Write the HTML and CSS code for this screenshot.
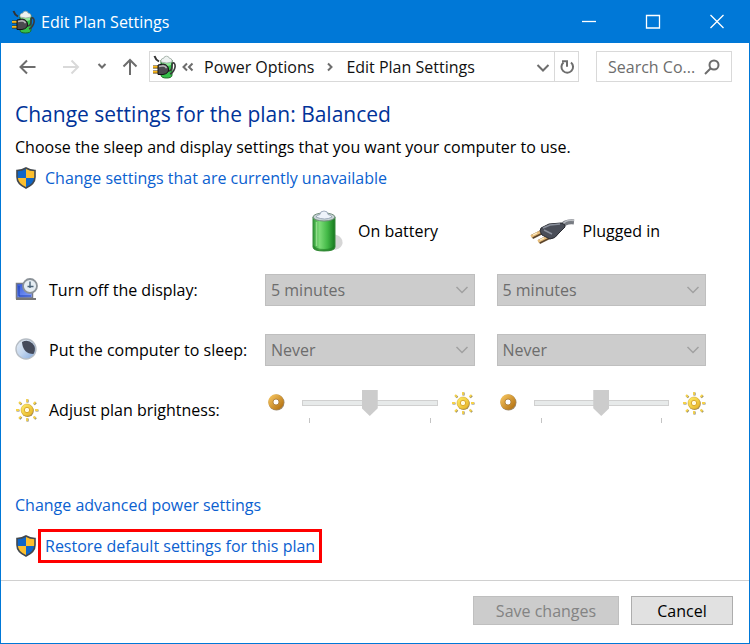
FILE: index.html
```html
<!DOCTYPE html>
<html lang="en">
<head>
    <meta charset="UTF-8">
    <meta name="viewport" content="width=device-width, initial-scale=1.0">
    <title>Edit Plan Settings</title>
    <link rel="stylesheet" href="styles.css">
</head>
<body>
    <!-- Shared icons -->
    <svg class="sprite" aria-hidden="true">
        <defs>
            <linearGradient id="green" x1="0" x2="1" y1="0" y2="0">
                <stop offset="0" stop-color="#2f9a36"/>
                <stop offset="0.3" stop-color="#7ddc78"/>
                <stop offset="0.65" stop-color="#43b947"/>
                <stop offset="1" stop-color="#16781e"/>
            </linearGradient>
            <linearGradient id="gold" x1="0" x2="1" y1="0" y2="1">
                <stop offset="0" stop-color="#f0bd58"/>
                <stop offset="1" stop-color="#b87716"/>
            </linearGradient>
            <linearGradient id="yellow" x1="0" x2="1" y1="0" y2="1">
                <stop offset="0" stop-color="#fff06a"/>
                <stop offset="1" stop-color="#e6b022"/>
            </linearGradient>
            <linearGradient id="screen" x1="0" x2="1" y1="0" y2="1">
                <stop offset="0" stop-color="#2f55d8"/>
                <stop offset="1" stop-color="#8fa9ff"/>
            </linearGradient>
            <linearGradient id="moon" x1="0" x2="1" y1="0" y2="1">
                <stop offset="0" stop-color="#e9eff5"/>
                <stop offset="0.5" stop-color="#c3d6ee"/>
                <stop offset="1" stop-color="#7fa6dc"/>
            </linearGradient>
        </defs>
        <symbol id="icon-power" viewBox="0 0 24 24">
            <path d="M9 5v15q0 3 5.500 3t5.500-3V5z" fill="#35c04a" stroke="#1b6a22"/>
            <path d="M10 6h9v4q-4 2-9 0z" fill="#8fe89a"/>
            <path d="M9 5.500q0-2 3-2.500 0-1.800 2.500-1.800T17 3q3 .5 3 2.500v1.500q-5 2-11 0z" fill="#eef2f0" stroke="#9aa8a0" stroke-width=".8"/>
            <path d="M2.500 1q1 3.500 4.500 5.500" fill="none" stroke="#333" stroke-width="2"/>
            <path d="M16 16q4 0 4-4.500T22 8q2 2 .5 6T18 19" fill="none" stroke="#3a3a3c" stroke-width="1.600"/>
            <path d="M1 12h5M1 17h5" stroke="#4b3300" stroke-width="3"/>
            <path d="M1 11.800h5M1 16.800h5" stroke="#fbb91f" stroke-width="1.800"/>
            <path d="M6 10l5-1q5 .5 5.500 5T11 19.500H6z" fill="#4a4a4e" stroke="#151515"/>
            <path d="M7 11.500l4-.8q3 .5 3.500 2.500" fill="none" stroke="#b5b5b8" stroke-width="1.500"/>
        </symbol>
        <symbol id="icon-shield" viewBox="0 0 20 22">
            <path d="M10 1Q6 3.500 1 3.500V10q0 7 9 11z" fill="#0f66c8"/>
            <path d="M10 1q4 2.500 9 2.500V10q0 7-9 11z" fill="#fcbf2e"/>
            <path d="M1 11h9v10Q2 17.500 1 11z" fill="#fcbf2e"/>
            <path d="M10 11h9q-1 6.500-9 10z" fill="#0f66c8"/>
            <path d="M10 1Q6 3.500 1 3.500V10q0 7 9 11 9-4 9-11V3.500Q14 3.500 10 1z" fill="none" stroke="#42484e" stroke-width="1.600"/>
        </symbol>
        <symbol id="icon-sun" viewBox="0 0 24 24">
            <g stroke="#85806a" stroke-width="2.200">
                <path d="M12.500 1.500v3M12.500 20.500v3M1.500 12.500h3M20.500 12.500h3M4.500 4.500l2 2M19 19l2 2M4.500 21l2-2M19 6.500l2-2"/>
            </g>
            <g stroke="#f6d24a" stroke-width="1.800">
                <path d="M12 1v3M12 20v3M1 12h3M20 12h3M4 4l2 2M18.500 18.500l2 2M4 20.500l2-2M18.500 6l2-2"/>
            </g>
            <circle cx="12.600" cy="12.800" r="6.200" fill="#a38b55"/>
            <circle cx="12" cy="12" r="6" fill="url(#yellow)" stroke="#dcae30" stroke-width=".6"/>
            <circle cx="12" cy="12" r="2.700" fill="#fffbe0" stroke="#dba92c"/>
        </symbol>
        <symbol id="icon-dim" viewBox="0 0 24 24">
            <circle cx="11.500" cy="11.600" r="8" fill="#9b8a70"/>
            <circle cx="11" cy="11" r="5.400" fill="none" stroke="url(#gold)" stroke-width="4.800"/>
            <circle cx="11" cy="11" r="3" fill="#fff" stroke="#a8752a" stroke-width=".8"/>
        </symbol>
    </svg>

    <div class="window">
        <!-- Title bar -->
        <header class="titlebar">
            <svg class="icon"><use href="#icon-power"/></svg>
            <span class="titlebar-text">Edit Plan Settings</span>
            <button class="window-button" aria-label="Minimize">
                <svg width="16" height="16" viewBox="0 0 16 16"><path d="M1 7.500h14"/></svg>
            </button>
            <button class="window-button" aria-label="Maximize">
                <svg width="16" height="16" viewBox="0 0 16 16"><path d="M1.500 1.500h13v12.500h-13z"/></svg>
            </button>
            <button class="window-button" aria-label="Close">
                <svg width="16" height="16" viewBox="0 0 16 16"><path d="M1.500 1l13 13M14.500 1l-13 13"/></svg>
            </button>
        </header>

        <!-- Navigation -->
        <nav class="toolbar">
            <div class="nav-buttons">
                <button aria-label="Back">
                    <svg width="18" height="18" viewBox="0 0 18 18"><path d="M17.500 9H2.500M9 2.500L2.500 9 9 15.500"/></svg>
                </button>
                <button class="faded" aria-label="Forward" disabled>
                    <svg width="18" height="18" viewBox="0 0 18 18"><path d="M1 9h15M9.500 2.500L16 9l-6.500 6.500"/></svg>
                </button>
                <button aria-label="Recent locations">
                    <svg width="10" height="18" viewBox="0 0 10 18"><path d="M1.500 6L5 9.500 8.500 6"/></svg>
                </button>
                <button aria-label="Up">
                    <svg width="18" height="18" viewBox="0 0 18 18"><path d="M9 17V2M2.500 8.500L9 2l6.500 6.500"/></svg>
                </button>
            </div>
            <div class="address">
                <svg class="icon"><use href="#icon-power"/></svg>
                <svg class="crumb-more" width="12" height="10" viewBox="0 0 12 10"><path d="M5 1.500L1.500 5 5 8.500M10.500 1.500L7 5l3.500 3.500"/></svg>
                <a class="crumb" href="#">Power Options</a>
                <svg class="crumb-arrow" width="6" height="10" viewBox="0 0 6 10"><path d="M1 1.500L4.500 5 1 8.500"/></svg>
                <a class="crumb" href="#">Edit Plan Settings</a>
                <button class="address-drop" aria-label="Previous locations">
                    <svg width="14" height="10" viewBox="0 0 14 10"><path d="M1.500 3L7 8.500 12.500 3"/></svg>
                </button>
                <button class="address-refresh" aria-label="Refresh">
                    <svg width="16" height="18" viewBox="0 0 16 18"><path d="M12 4.500a5.800 5.800 0 1 1-7.500 0M3 3.200h5v5.500"/></svg>
                </button>
            </div>
            <div class="search">
                <input type="text" placeholder="Search Co..." aria-label="Search Control Panel">
                <svg width="16" height="16" viewBox="0 0 16 16"><circle cx="10" cy="6" r="4.500"/><path d="M6.500 9.500L1 15"/></svg>
            </div>
        </nav>

        <main class="content">
            <h1>Change settings for the plan: Balanced</h1>
            <p class="intro">Choose the sleep and display settings that you want your computer to use.</p>
            <div class="shield-link">
                <svg class="shield"><use href="#icon-shield"/></svg>
                <a href="#">Change settings that are currently unavailable</a>
            </div>

            <!-- Plan settings -->
            <div class="settings">
                <div class="mode mode-battery">
                    <svg width="55" height="46" viewBox="0 0 55 46">
                        <path d="M35 42q8 0 10-5t-3-9l-5-2z" fill="#bbb" opacity=".6"/>
                        <path d="M16 9v30q0 4 11 4t11-4V9z" fill="url(#green)" stroke="#398b3c"/>
                        <path d="M16.500 37q2 4 10.500 4t10.500-4v2q0 4-10.500 4t-10.500-4z" fill="#1d7a22" opacity=".6"/>
                        <ellipse cx="27" cy="9" rx="11" ry="4" fill="#c8d4d4" stroke="#718b7c"/>
                        <path d="M19 9q1-2 4-2.500Q23 3 27 3t4 3.500q3 .5 4 2.500-7 4-16 0z" fill="#eef3fa" stroke="#8e9db0" stroke-width=".8"/>
                        <path d="M19.500 14v24" stroke="#baf3af" stroke-width="1.500" opacity=".6"/>
                    </svg>
                    <span>On battery</span>
                </div>
                <div class="mode mode-plugged">
                    <svg width="48" height="46" viewBox="0 0 48 46">
                        <path d="M32 19q4-6 13-5" fill="none" stroke="#777b82" stroke-width="5"/>
                        <path d="M33 17q4-6 12-4.500" fill="none" stroke="#b9bcc1" stroke-width="1.500"/>
                        <path d="M3 29l12-6M10 34l12-6" stroke="#5d452b" stroke-width="4.500"/>
                        <path d="M2 28.500l12-6M9 33.500l12-6" stroke="#e7bd7c" stroke-width="2.600"/>
                        <path d="M4 27l4-2M11 32l4-2" stroke="#fff0cb" stroke-width="1.200"/>
                        <path d="M12 20l8-4 12-1q5 1 4 4l-6 6q-4 6-9 6l-8-4-2-4z" fill="#4a4e58" stroke="#2b2d33"/>
                        <path d="M14 20l7-3 10-1M15 22l8 4" fill="none" stroke="#8a909c" stroke-width="1.500"/>
                    </svg>
                    <span>Plugged in</span>
                </div>

                <div class="setting-label">
                    <svg class="icon" viewBox="0 0 24 24">
                        <path d="M1.500 5.500h16V20h-16z" fill="url(#screen)" stroke="#777b86" stroke-width="1.500"/>
                        <path d="M1 21h20" stroke="#777" stroke-width="2"/>
                        <path d="M4 8v10h12" fill="none" stroke="#1d40b5"/>
                        <circle cx="15" cy="8" r="7" fill="#e5edf3" stroke="#8b9298" stroke-width="1.800"/>
                        <path d="M15 3.500V10M12.500 8.500h6" fill="none" stroke="#4c6478" stroke-width="1.400"/>
                    </svg>
                    <span id="display-label">Turn off the display:</span>
                </div>
                <select aria-labelledby="display-label" disabled><option>5 minutes</option></select>
                <select aria-labelledby="display-label" disabled><option>5 minutes</option></select>

                <div class="setting-label">
                    <svg class="icon" viewBox="0 0 24 24">
                        <circle cx="11" cy="11" r="10" fill="url(#moon)" stroke="#b6bdc5" stroke-width="1.400"/>
                        <path d="M7 4Q13 1 17.500 5.500T18.500 16Q8 16 7 4z" fill="#454b5b"/>
                    </svg>
                    <span id="sleep-label">Put the computer to sleep:</span>
                </div>
                <select aria-labelledby="sleep-label" disabled><option>Never</option></select>
                <select aria-labelledby="sleep-label" disabled><option>Never</option></select>

                <div class="setting-label">
                    <svg class="icon"><use href="#icon-sun"/></svg>
                    <span id="brightness-label">Adjust plan brightness:</span>
                </div>
                <div class="brightness">
                    <svg class="icon"><use href="#icon-dim"/></svg>
                    <div class="slider">
                        <input type="range" min="0" max="100" value="50" aria-labelledby="brightness-label" disabled>
                        <div class="ticks"></div>
                    </div>
                    <svg class="icon"><use href="#icon-sun"/></svg>
                </div>
                <div class="brightness">
                    <svg class="icon"><use href="#icon-dim"/></svg>
                    <div class="slider">
                        <input type="range" min="0" max="100" value="50" aria-labelledby="brightness-label" disabled>
                        <div class="ticks"></div>
                    </div>
                    <svg class="icon"><use href="#icon-sun"/></svg>
                </div>
            </div>

            <a class="advanced" href="#">Change advanced power settings</a>
            <div class="shield-link restore">
                <svg class="shield"><use href="#icon-shield"/></svg>
                <a class="highlight" href="#">Restore default settings for this plan</a>
            </div>
        </main>

        <footer class="footer">
            <button class="save" disabled>Save changes</button>
            <button class="cancel">Cancel</button>
        </footer>
    </div>
</body>
</html>
```
FILE: styles.css
```css
* {
    box-sizing: border-box;
}

body {
    margin: 0;
    font-family: "Open Sans", "Noto Sans", sans-serif;
    font-size: 16px;
    line-height: 24px;
    color: #000;
    background: #fff;
}

button, input, select {
    font: inherit;
    margin: 0;
}

svg {
    flex: none;
}

a {
    color: #0b61d0;
    text-decoration: none;
}

.sprite {
    position: absolute;
    width: 0;
    height: 0;
}

.icon {
    width: 24px;
    height: 24px;
}

.window {
    display: flex;
    flex-direction: column;
    min-height: 100vh;
    border: 1px solid #0078d7;
}

/* Title bar */
.titlebar {
    display: flex;
    align-items: center;
    height: 42px;
    padding-left: 10px;
    background: #0078d7;
    color: #fff;
}

.titlebar-text {
    flex: 1;
    margin-left: 6px;
}

.window-button {
    width: 64px;
    height: 40px;
    padding: 0;
    border: none;
    background: none;
}

.window-button svg {
    display: block;
    margin: 0 auto;
    fill: none;
    stroke: #fff;
    stroke-width: 1.3;
}

/* Navigation */
.toolbar {
    display: flex;
    align-items: center;
    height: 47px;
    padding: 0 17px;
    color: #111;
}

.toolbar svg:not(.icon) {
    display: block;
    fill: none;
    stroke: #6d6d6d;
    stroke-width: 2;
}

.toolbar button {
    display: flex;
    align-items: center;
    justify-content: center;
    padding: 0;
    border: none;
    background: none;
}

.nav-buttons {
    display: flex;
    justify-content: space-between;
    width: 121px;
    margin-right: 10px;
}

.toolbar .faded svg {
    stroke: #d9d9d9;
}

.nav-buttons button:nth-child(2) {
    margin-left: 12px;
}

.nav-buttons button:nth-child(3) {
    margin-left: 4px;
}

.address {
    display: flex;
    align-items: center;
    flex: 1;
    height: 31px;
    padding-left: 2px;
    border: 1px solid #d9d9d9;
}

.crumb {
    color: #111;
    white-space: nowrap;
}

.crumb-more {
    margin: 0 10px 0 6px;
}

.crumb-arrow {
    margin: 0 13px;
}

.address-drop {
    width: 22px;
    height: 29px;
    margin-left: auto;
}

.toolbar .address-refresh {
    width: 24px;
    height: 29px;
    border-left: 1px solid #d9d9d9;
}

.search {
    display: flex;
    align-items: center;
    width: 136px;
    height: 31px;
    margin-left: 17px;
    padding: 0 11px;
    border: 1px solid #d9d9d9;
}

.search input {
    flex: 1;
    min-width: 0;
    padding: 0;
    border: none;
    outline: none;
    background: none;
}

.search input::placeholder {
    color: #6d6d6d;
    opacity: 1;
}

/* Content */
.content {
    flex: 1;
    padding: 8px 43px 16px 14px;
}

h1 {
    margin: 0;
    font-size: 21px;
    font-weight: normal;
    line-height: 32px;
    color: #003399;
}

.intro {
    margin: 5px 0 7px;
}

.shield-link {
    display: flex;
    align-items: center;
}

.shield {
    width: 22px;
    height: 22px;
    margin-right: 8px;
}

/* Plan settings */
.settings {
    display: grid;
    grid-template-columns: 228px 1fr 1fr;
    grid-template-rows: 36px;
    grid-auto-rows: 38px;
    gap: 22px;
    align-items: center;
    margin-top: 23px;
}

.mode {
    display: flex;
    align-items: center;
    gap: 6px;
    height: 36px;
    padding-left: 32px;
}

.mode-battery {
    grid-column: 2;
}

.setting-label {
    display: flex;
    align-items: center;
    gap: 10px;
    white-space: nowrap;
}

select {
    width: 100%;
    height: 32px;
    padding: 0 5px;
    appearance: none;
    border: 1px solid #bfbfbf;
    border-radius: 0;
    color: #6d6d6d;
    opacity: 1;
    background: #ccc url("data:image/svg+xml,%3Csvg xmlns='http://www.w3.org/2000/svg' width='14' height='8'%3E%3Cpath d='M1.500 1l5.500 5.500L12.500 1' fill='none' stroke='%23a0a0a0' stroke-width='1.500'/%3E%3C/svg%3E") no-repeat right 5px center;
}

.brightness {
    display: flex;
    align-items: flex-start;
    align-self: start;
}

.slider {
    flex: 1;
    margin: 0 13px;
}

.slider input {
    display: block;
    width: 100%;
    height: 24px;
    appearance: none;
    background: none;
}

.slider input::-webkit-slider-runnable-track {
    height: 6px;
    border: 1px solid #d0d0d0;
    background: #e7eaea;
}

.slider input::-webkit-slider-thumb {
    appearance: none;
    width: 16px;
    height: 26px;
    margin-top: -11px;
    background: #ccc;
    clip-path: polygon(0 0, 100% 0, 100% 70%, 50% 100%, 0 70%);
}

.ticks {
    height: 5px;
    margin: 3px 7px 0;
    border: solid #c4c4c4;
    border-width: 0 1px;
}

.advanced {
    display: inline-block;
    margin-top: 64px;
}

.restore {
    margin-top: 12px;
}

.highlight {
    margin-left: -7px;
    padding: 2px 4px;
    border: 3px solid #f00;
}

/* Footer */
.footer {
    display: flex;
    justify-content: flex-end;
    gap: 12px;
    padding: 15px 16px 18px;
    border-top: 1px solid #d0d0d0;
}

.footer button {
    height: 29px;
    padding: 0;
    border: 1px solid #adadad;
    background: #e1e1e1;
    line-height: 24px;
    color: #000;
}

.footer .save {
    width: 146px;
    border-color: #bfbfbf;
    background: #ccc;
    color: #838383;
}

.footer .cancel {
    width: 102px;
}
```
